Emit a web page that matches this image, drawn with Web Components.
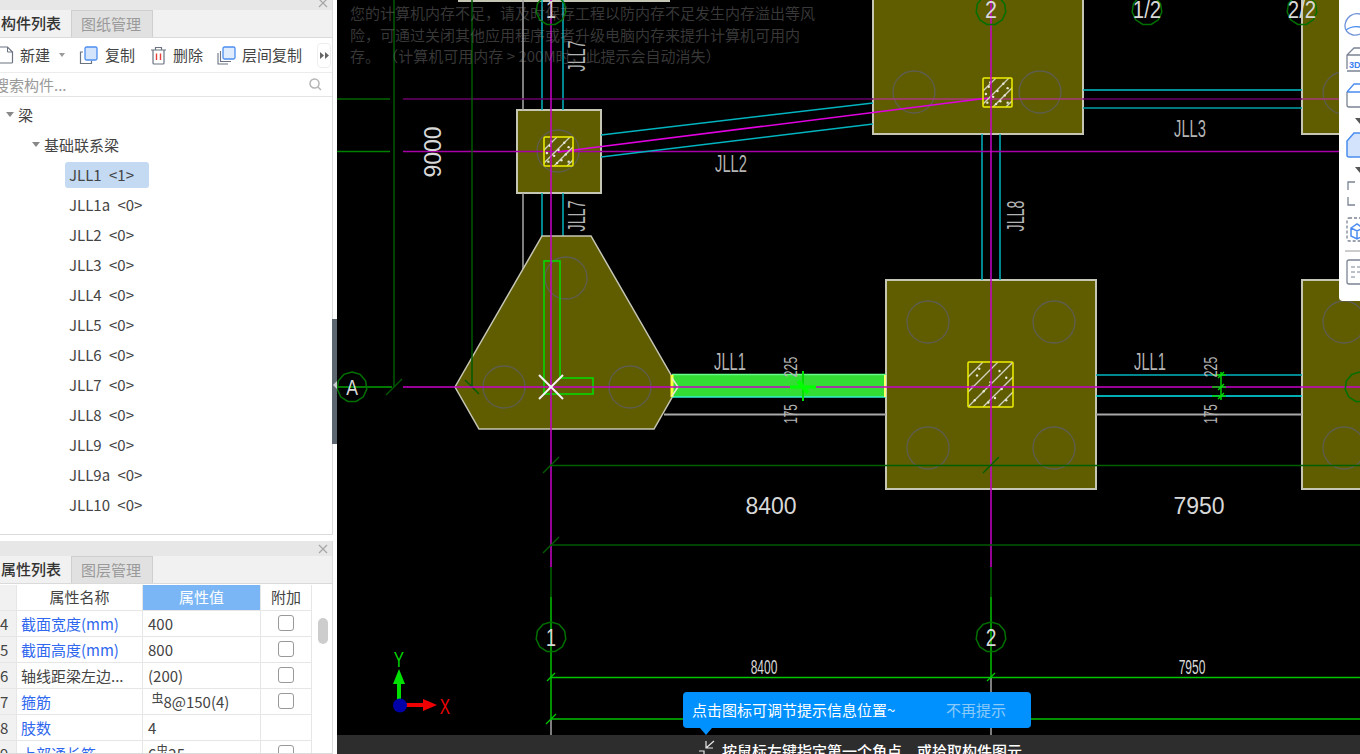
<!DOCTYPE html>
<html lang="zh">
<head>
<meta charset="utf-8">
<title>构件列表</title>
<style>
  html, body { margin: 0; height: 754px; overflow: hidden; background: #000; }
  body { display: flex; font-family: "Noto Sans CJK SC", "Noto Sans", sans-serif; }
</style>
</head>
<body>
<side-bar>
  <dock-panel tabs="构件列表,图纸管理" style="height:540px;margin-top:-5px">
    <tool-bar></tool-bar>
    <search-box></search-box>
    <comp-tree></comp-tree>
  </dock-panel>
  <dock-panel tabs="属性列表,图层管理" style="flex:1;margin-top:6px">
    <prop-table></prop-table>
  </dock-panel>
</side-bar>
<cad-canvas>
  <mem-notice></mem-notice>
  <right-tools></right-tools>
  <hint-bubble></hint-bubble>
  <status-bar></status-bar>
</cad-canvas>

<script>
class SideBar extends HTMLElement {
  constructor() {
    super();
    this.attachShadow({mode: 'open'}).innerHTML = `
      <style>
        :host { display: flex; flex-direction: column; width: 337px; height: 754px; flex: none; background: #fff; position: relative; overflow: hidden; }
        .splitter { position: absolute; left: 332px; top: 319px; width: 5px; height: 125px; background: #5c6670; }
        .splitter::after { content: ''; position: absolute; left: 1px; top: 62px; border: 4px solid transparent; border-right-color: #c8ccd0; border-left: 0; }
      </style>
      <slot></slot>
      <div class="splitter"></div>
    `;
  }
}
customElements.define('side-bar', SideBar);

class DockPanel extends HTMLElement {
  constructor() {
    super();
    this.attachShadow({mode: 'open'});
  }

  connectedCallback() {
    const [first, second] = this.getAttribute('tabs').split(',');
    this.shadowRoot.innerHTML = `
      <style>
        :host { display: flex; flex-direction: column; width: 333px; box-sizing: border-box; border-right: 1px solid #dcdcdc; border-bottom: 1px solid #dcdcdc; overflow: hidden; color: #444; font-size: 15px; }
        .strip { height: 15px; flex: none; background: #e7e7e7; display: flex; justify-content: flex-end; align-items: center; padding-right: 4px; }
        .strip svg { display: block; }
        .tabs { height: 28px; flex: none; box-sizing: border-box; display: flex; background: #f1f1f1; border-bottom: 1px solid #dadada; }
        .tab { box-sizing: border-box; height: 27px; line-height: 25px; }
        .on { width: 71px; padding-left: 1px; font-weight: 500; color: #333; }
        .off { width: 82px; padding-left: 9px; color: #9a9a9a; background: #e1e1e1; border: 1px solid #cfcfcf; border-bottom: 0; }
      </style>
      <div class="strip"><svg width="10" height="10" viewBox="0 0 10 10"><path d="M1 1l8 8M9 1l-8 8" stroke="#a8a8a8" stroke-width="1.3"/></svg></div>
      <div class="tabs"><div class="tab on">${first}</div><div class="tab off">${second}</div></div>
      <slot></slot>
    `;
  }
}
customElements.define('dock-panel', DockPanel);

class ToolBar extends HTMLElement {
  constructor() {
    super();
    this.attachShadow({mode: 'open'}).innerHTML = `
      <style>
        :host { display: flex; align-items: center; height: 35px; flex: none; box-sizing: border-box; border-bottom: 1px solid #ececec; background: #fff; white-space: nowrap; }
        svg { display: block; flex: none; }
        span { line-height: 20px; flex: none; }
        .more { margin-left: 15px; width: 12px; height: 23px; flex: none; border: 1px solid #eee; border-radius: 4px; display: flex; align-items: center; justify-content: center; }
      </style>
      <svg style="margin-left:-4px" width="18" height="18" viewBox="0 0 18 18" fill="none"><path d="M1.5 1h10l5 5v10a1 1 0 0 1-1 1h-13a1 1 0 0 1-1-1z" stroke="#6b7280" stroke-width="1.2"/><path d="M11.5 1v5h5" stroke="#6b7280"/></svg>
      <span style="margin-left:6px">新建</span>
      <svg style="margin-left:8px" width="8" height="5" viewBox="0 0 8 5"><path d="M1 0h6L4 4z" fill="#999"/></svg>
      <svg style="margin-left:13px" width="19" height="19" viewBox="0 0 19 19" fill="none"><path d="M4 6H1.5v11.5h11V15" stroke="#6b7280" stroke-width="1.2"/><rect x="6" y="1" width="12" height="13" rx="1.5" fill="#d4e4fb" stroke="#4b8df0" stroke-width="1.3"/></svg>
      <span style="margin-left:7px">复制</span>
      <svg style="margin-left:15px" width="17" height="19" viewBox="0 0 17 19" fill="none"><path d="M1 4h15M5.5 4V1.5h6V4M3 4v13a1 1 0 0 0 1 1h9a1 1 0 0 0 1-1V4" stroke="#6b7280" stroke-width="1.2"/><path d="M6.5 7.5v6.5M10.5 7.5v6.5" stroke="#e8403a" stroke-width="1.4"/></svg>
      <span style="margin-left:6px">删除</span>
      <svg style="margin-left:14px" width="19" height="19" viewBox="0 0 19 19" fill="none"><path d="M1 7v11h10M3.5 5v10.5H14" stroke="#6b7280" stroke-width="1.1"/><rect x="6" y="1" width="12" height="12" rx="1.5" fill="#e0ecfc" stroke="#4b8df0" stroke-width="1.3"/></svg>
      <span style="margin-left:6px">层间复制</span>
      <div class="more"><svg width="9" height="7" viewBox="0 0 9 7"><path d="M0 0l4 3.5L0 7zM5 0l4 3.5L5 7z" fill="#666"/></svg></div>
    `;
  }
}
customElements.define('tool-bar', ToolBar);

class SearchBox extends HTMLElement {
  constructor() {
    super();
    this.attachShadow({mode: 'open'}).innerHTML = `
      <style>
        :host { display: flex; align-items: center; justify-content: space-between; height: 24px; flex: none; box-sizing: border-box; border-bottom: 1px solid #e4e4e4; background: #fff; padding-right: 10px; }
        span { margin-left: -6px; color: #999; font-size: 15px; line-height: 22px; }
        svg { display: block; }
      </style>
      <span>搜索构件...</span>
      <svg width="13" height="13" viewBox="0 0 13 13" fill="none"><circle cx="5.5" cy="5.5" r="4.5" stroke="#b5b5b5" stroke-width="1.5"/><path d="M9 9l3 3" stroke="#b5b5b5" stroke-width="1.5"/></svg>
    `;
  }
}
customElements.define('search-box', SearchBox);

class CompTree extends HTMLElement {
  constructor() {
    super();
    const beams = ['JLL1 &lt;1&gt;', 'JLL1a &lt;0&gt;', 'JLL2 &lt;0&gt;', 'JLL3 &lt;0&gt;', 'JLL4 &lt;0&gt;', 'JLL5 &lt;0&gt;', 'JLL6 &lt;0&gt;', 'JLL7 &lt;0&gt;', 'JLL8 &lt;0&gt;', 'JLL9 &lt;0&gt;', 'JLL9a &lt;0&gt;', 'JLL10 &lt;0&gt;'];
    this.attachShadow({mode: 'open'}).innerHTML = `
      <style>
        :host { display: block; flex: 1; background: #fff; padding-top: 3px; }
        .row { height: 30px; box-sizing: border-box; display: flex; align-items: center; white-space: pre; }
        .caret { width: 0; height: 0; border: 4.5px solid transparent; border-top: 5px solid #888; border-bottom: 0; margin-right: 4px; }
        .l0 { padding-left: 6px; padding-bottom: 2px; }
        .l1 { padding-left: 32px; padding-bottom: 2px; }
        .leaf { padding-left: 65px; }
        .leaf span { display: block; box-sizing: border-box; height: 26px; line-height: 26px; padding: 0 4px; border-radius: 3px; min-width: 84px; word-spacing: 4px; }
        .sel { background: #c3daf2; }
      </style>
      <div class="row l0"><i class="caret"></i>梁</div>
      <div class="row l1"><i class="caret"></i>基础联系梁</div>
      ${beams.map((b, i) => `<div class="row leaf"><span class="${i ? '' : 'sel'}">${b}</span></div>`).join('')}
    `;
  }
}
customElements.define('comp-tree', CompTree);

class PropTable extends HTMLElement {
  constructor() {
    super();
    const box = '<i class="box"></i>';
    const rebar = '<sup>虫</sup>';
    const rows = [
      ['4', '截面宽度(mm)', '400', box, 1],
      ['5', '截面高度(mm)', '800', box, 1],
      ['6', '轴线距梁左边...', '(200)', box, 0],
      ['7', '箍筋', `&nbsp;${rebar}8@150(4)`, box, 1],
      ['8', '肢数', '4', '', 1],
      ['9', '上部通长筋', `6${rebar}25`, box, 1]
    ];
    this.attachShadow({mode: 'open'}).innerHTML = `
      <style>
        :host { display: block; position: relative; flex: 1; background: #fff; padding-top: 1px; overflow: hidden; }
        .grid { display: grid; grid-template-columns: 17px 126px 118px 51px; grid-auto-rows: 26px; width: 312px; }
        .grid > div { box-sizing: border-box; border-right: 1px solid #e6e6e6; border-bottom: 1px solid #e6e6e6; line-height: 26px; padding-left: 4px; white-space: nowrap; overflow: hidden; }
        .grid > .value { padding-left: 5px; }
        .grid > .num { background: #f1f1f1; padding-left: 0; text-align: right; padding-right: 9px; overflow: visible; }
        .grid > .head { text-align: center; padding: 0; line-height: 24px; }
        .grid > .val { background: #7ab6f5; color: #fff; }
        .blue { color: #2f68ee; }
        .grid > .add { padding: 0; display: flex; align-items: center; justify-content: center; }
        .box { display: block; width: 16px; height: 16px; box-sizing: border-box; border: 1px solid #999; border-radius: 3px; margin-top: -2px; }
        sup { font-size: 12px; line-height: 0; vertical-align: 5px; }
        .thumb { position: absolute; left: 318px; top: 34px; width: 10px; height: 26px; border-radius: 5px; background: #cdcdcd; }
      </style>
      <div class="grid">
        <div class="num"></div><div class="head">属性名称</div><div class="head val">属性值</div><div class="head">附加</div>
        ${rows.map(r => `<div class="num">${r[0]}</div><div class="${r[4] ? 'blue' : ''}">${r[1]}</div><div class="value">${r[2]}</div><div class="add">${r[3]}</div>`).join('')}
      </div>
      <div class="thumb"></div>
    `;
  }
}
customElements.define('prop-table', PropTable);

class CadCanvas extends HTMLElement {
  constructor() {
    super();
    this.attachShadow({mode: 'open'}).innerHTML = `
      <style>
        :host { display: block; position: relative; flex: 1; height: 754px; background: #000; overflow: hidden; }
        svg { display: block; width: 1023px; height: 754px; }
        text { font-family: "Liberation Sans", sans-serif; fill: #d8d8d8; }
        text.thin { fill: #b4b4b4; }
      </style>
      <svg viewBox="337 0 1023 754">${this.drawing()}</svg>
      <slot></slot>
    `;
  }

  line(x1, y1, x2, y2, color, w = 1.5) {
    return `<line x1="${x1}" y1="${y1}" x2="${x2}" y2="${y2}" stroke="${color}" stroke-width="${w}"/>`;
  }

  label(str, x, y, size, sx = 1, rot = 0, cls = '') {
    return `<text class="${cls}" text-anchor="middle" font-size="${size}" transform="translate(${x} ${y}) rotate(${rot}) scale(${sx} 1)">${str}</text>`;
  }

  pile(cx, cy) {
    return `<circle cx="${cx}" cy="${cy}" r="21" fill="none" stroke="#5e5e50" stroke-width="1.3"/>`;
  }

  footing(x, y, w, h) {
    return `<rect x="${x}" y="${y}" width="${w}" height="${h}" fill="#605c00" stroke="#c6c6b4" stroke-width="2"/>`;
  }

  bubble(cx, cy, r = 15) {
    const pts = [];
    for (let i = 0; i < 11; i++) {
      const a = Math.PI * 2 * i / 11 - Math.PI / 2;
      pts.push((cx + r * Math.cos(a)).toFixed(1) + ',' + (cy + r * Math.sin(a)).toFixed(1));
    }
    return `<polygon points="${pts.join(' ')}" fill="none" stroke="#007000" stroke-width="1.5"/>`;
  }

  tick(x, y, color, r = 8) {
    return this.line(x - r, y + r, x + r, y - r, color, 1.3);
  }

  // column section: yellow square with rebar hatching
  column(x, y, s, id, step) {
    const lines = [];
    for (let o = x - s; o < x + s; o += step) {
      lines.push(this.line(o, y + s, o + s, y, '#d0d0c0', 1.3));
    }
    const dots = [[.2, .3], [.7, .2], [.85, .35], [.35, .65], [.15, .85], [.6, .8], [.85, .85], [.5, .45], [.25, .15], [.75, .6], [.45, .9], [.1, .55]]
      .map(d => `<circle cx="${x + d[0] * s}" cy="${y + d[1] * s}" r="1.2" fill="#e8e8d8"/>`).join('');
    return `<clipPath id="${id}"><rect x="${x}" y="${y}" width="${s}" height="${s}"/></clipPath>
      <g clip-path="url(#${id})">${lines.join('')}${dots}</g>
      <rect x="${x}" y="${y}" width="${s}" height="${s}" rx="1" fill="none" stroke="#f0f000" stroke-width="1.5"/>`;
  }

  drawing() {
    const L = this.line.bind(this), T = this.label.bind(this);
    const mag = '#c800c8', dmag = '#6a006a', cyan = '#00b4c0', gray = '#a8a8a8';
    const dg = '#005a00', g = '#00a000';
    return `
      ${this.footing(459, -20, 210, 21)}
      ${this.footing(873, -5, 210, 139)}
      ${this.footing(1302, -5, 70, 139)}
      ${this.footing(517, 110, 84, 83)}
      ${this.footing(886, 280, 210, 209)}
      ${this.footing(1302, 280, 70, 209)}

      ${L(523, 0, 523, 110, gray)}${L(523, 193, 523, 270, gray)}
      ${L(542, 0, 542, 110, cyan)}${L(563, 0, 563, 110, cyan)}
      ${L(542, 193, 542, 236, cyan)}${L(563, 193, 563, 236, cyan)}
      ${L(982, 134, 982, 280, cyan)}${L(1000, 134, 1000, 280, cyan)}

      <polygon points="542,236 591,236 678,387 654,429 479,429 455,387" fill="#605c00" stroke="#c6c6b4" stroke-width="1.5"/>

      ${[[914, 92], [1040, 92], [1344, 93], [558, 151], [928, 322], [1054, 322], [928, 448], [1054, 448], [1344, 322], [1344, 448], [566, 278], [504, 387], [630, 387]].map(p => this.pile(p[0], p[1])).join('')}

      ${L(337, 99, 390, 99, '#006400')}${L(403, 99, 873, 99, dmag)}${L(873, 99, 1083, 99, '#a83a78')}${L(1083, 99, 1302, 99, dmag)}${L(1302, 99, 1340, 99, '#a83a78')}
      ${L(337, 151.5, 390, 151.5, '#008000')}${L(403, 151.5, 1340, 151.5, '#a800a8')}
      ${L(394, 0, 394, 387, dg)}${L(472, 0, 472, 387, dg)}
      ${this.tick(394, 387, dg)}${L(465, 380, 479, 394, dg, 1.3)}

      ${L(601, 135, 873, 103, cyan)}${L(601, 157, 873, 124, cyan)}
      ${L(558, 152, 988, 98, '#e000e0')}
      ${L(1083, 90, 1302, 90, '#00c0c8')}${L(1083, 108, 1302, 108, '#00a0a8')}

      ${this.column(544, 137, 29, 'c1', 13)}
      ${this.column(983, 78, 29, 'c2', 13)}
      ${this.column(968, 362, 45, 'c3', 15)}

      <path d="M544 261h16v117h33v16h-49z" fill="none" stroke="#00e000" stroke-width="1.5"/>

      <rect x="672" y="375" width="214" height="22" fill="#33dd33"/>
      ${L(672, 374.5, 886, 374.5, '#66ff88')}${L(672, 397, 886, 397, '#30f0d0')}
      ${L(672, 375, 672, 397, '#ffff40', 3)}${L(885, 375, 885, 397, '#ffff70', 2)}
      <path d="M672 378l6 9-6 9" fill="none" stroke="#e8e8d0" stroke-width="1.5"/>
      ${L(664, 414.5, 886, 414.5, gray, 2)}${L(1096, 414.5, 1302, 414.5, gray, 2)}
      ${L(1096, 375, 1302, 375, cyan)}${L(1096, 396, 1302, 396, '#00e8f0')}

      ${L(337, 387, 392, 387, g)}${L(403, 387, 1360, 387, mag)}
      ${L(551, 0, 551, 567, mag)}${L(991, 0, 991, 567, mag)}
      ${L(551, 567, 551, 597, '#006400')}${L(991, 567, 991, 597, '#006400')}
      ${L(551, 597, 551, 720, '#00c000')}${L(991, 597, 991, 678, '#00c000')}
      ${L(551, 720, 551, 754, gray)}${L(991, 678, 991, 754, gray)}

      ${L(539, 375, 563, 399, '#f4f4f4', 2)}${L(563, 375, 539, 399, '#f4f4f4', 2)}

      ${L(790, 387, 816, 387, '#00ff00', 3)}${L(803, 371, 803, 401, '#00e000', 2)}${L(798, 381, 808, 393, '#00ff00', 4)}
      ${L(1212, 375, 1226, 375, '#00d000')}${L(1212, 387, 1226, 387, '#00d000')}${L(1212, 396, 1226, 396, '#00d000')}
      ${L(1221, 372, 1221, 400, '#00d000')}
      ${this.tick(1221, 375, '#00e000', 3)}${this.tick(1221, 387, '#00e000', 3)}${this.tick(1221, 396, '#00e000', 3)}

      ${L(551, 465.5, 1360, 465.5, '#006000')}${L(551, 545, 1360, 545, '#005a00')}
      ${this.tick(551, 465, '#006000')}${this.tick(991, 465, '#006000')}${this.tick(551, 545, '#006000')}
      ${L(551, 677.5, 1360, 677.5, '#00c800')}${L(551, 719, 1360, 719, '#009000', 2)}
      ${this.tick(551, 677, '#00c800', 4)}${this.tick(991, 677, '#00c800', 4)}${this.tick(551, 719, '#00c800', 5)}

      ${this.bubble(551, 10)}${this.bubble(991, 10)}${this.bubble(1147, 10)}${this.bubble(1302, 10)}
      ${this.bubble(551, 637)}${this.bubble(991, 637)}${this.bubble(352, 387)}${this.bubble(1360, 387)}

      ${T('1', 551, 18, 24, .75)}${T('2', 991, 18, 24, .9)}${T('1/2', 1147, 18, 24, .85)}${T('2/2', 1302, 18, 24, .85)}
      ${T('1', 551, 646, 24, .75)}${T('2', 991, 646, 24, .8)}${T('A', 352, 395, 22, .8)}

      ${T('9000', 441, 152, 23, 1, -90)}
      ${T('JLL7', 585, 56, 23, .62, -90, 'thin')}${T('JLL7', 585, 216, 23, .62, -90, 'thin')}${T('JLL8', 1024, 216, 23, .62, -90, 'thin')}
      ${T('JLL2', 731, 172, 23, .64, 0, 'thin')}${T('JLL3', 1190, 137, 23, .64, 0, 'thin')}
      ${T('JLL1', 730, 370, 23, .64, 0, 'thin')}${T('JLL1', 1150, 370, 23, .64, 0, 'thin')}
      ${T('225', 797, 367, 18, .68, -90, 'thin')}${T('175', 797, 414, 18, .65, -90, 'thin')}
      ${T('225', 1217, 367, 18, .68, -90, 'thin')}${T('175', 1217, 414, 18, .65, -90, 'thin')}
      ${T('8400', 771, 514, 23)}${T('7950', 1199, 514, 23)}
      ${T('8400', 764, 674, 20, .6)}${T('7950', 1192, 674, 20, .6)}

      ${L(399, 683, 399, 702, '#00e000', 4)}<path d="M399 669l6 15h-12z" fill="#00e000"/>
      ${L(404, 705, 424, 705, '#f00000', 4)}<path d="M437 705l-14 6v-12z" fill="#f00000"/>
      <circle cx="400" cy="705.5" r="7" fill="#0000a8"/>
      <text text-anchor="middle" font-size="22" style="fill:#00d800" transform="translate(399 667) scale(.7 1)">Y</text>
      <text text-anchor="middle" font-size="22" style="fill:#f00000" transform="translate(445 714) scale(.7 1)">X</text>
    `;
  }
}
customElements.define('cad-canvas', CadCanvas);

class MemNotice extends HTMLElement {
  constructor() {
    super();
    this.attachShadow({mode: 'open'}).innerHTML = `
      <style>
        :host { position: absolute; left: 13px; top: 2px; font-size: 15px; line-height: 21.5px; color: rgba(150, 150, 150, .38); white-space: nowrap; }
      </style>
      您的计算机内存不足，请及时保存工程以防内存不足发生内存溢出等风<br>
      险，可通过关闭其他应用程序或者升级电脑内存来提升计算机可用内<br>
      存。 （计算机可用内存 &gt; 200M时，此提示会自动消失）
    `;
  }
}
customElements.define('mem-notice', MemNotice);

class RightTools extends HTMLElement {
  constructor() {
    super();
    this.attachShadow({mode: 'open'}).innerHTML = `
      <style>
        :host { position: absolute; left: 1002px; top: 0; width: 21px; height: 301px; background: #fff; border-bottom-left-radius: 4px; overflow: hidden; }
        svg { display: block; }
        text { font-family: "Liberation Sans", sans-serif; font-weight: 700; font-size: 9px; fill: #3b82f0; }
      </style>
      <svg width="21" height="301" viewBox="1339 0 21 301" fill="none" stroke="#7b8494" stroke-width="1.3">
        <path d="M1360 14c-8-2-14 4-15 11-.5 5 3 9 8 10 3 .5 5 0 7-1" stroke="#6f93d8"/>
        <path d="M1346 30c4-3 9-4 14-3" stroke="#4b8df0"/>
        <path d="M1347 69V55l7-7h8M1347 55h15M1347 71h15" />
        <text x="1349" y="68" stroke="none">3D</text>
        <path d="M1347 92l7-8h8M1347 92h15" stroke="#4b8df0"/>
        <path d="M1347 92v13a2 2 0 0 0 2 2h13"/>
        <path d="M1355 118h10l-5 6z" fill="#555" stroke="none"/>
        <path d="M1347 141l7-8h8v24h-13a2 2 0 0 1-2-2z" fill="#d2e3fb" stroke="#4b8df0" stroke-width="1.5"/>
        <path d="M1355 167h10l-5 6z" fill="#555" stroke="none"/>
        <path d="M1355 182h-7v8M1355 205h-7v-8"/>
        <rect x="1347" y="218" width="20" height="23" rx="2" stroke-dasharray="3 2"/>
        <path d="M1351 228l6-4 6 4v8l-6 3-6-3zM1351 228l6 3 6-3M1357 231v8" stroke="#4b8df0" stroke-width="1.5"/>
        <path d="M1345 251h15" stroke="#999" stroke-width="1"/>
        <rect x="1347" y="260" width="20" height="24" rx="2"/>
        <path d="M1351 267h4M1357 267h5M1351 272h4M1357 272h5M1351 277h4" stroke-width="1"/>
      </svg>
    `;
  }
}
customElements.define('right-tools', RightTools);

class HintBubble extends HTMLElement {
  constructor() {
    super();
    this.attachShadow({mode: 'open'}).innerHTML = `
      <style>
        :host { position: absolute; left: 346px; top: 692px; width: 348px; height: 36px; box-sizing: border-box; padding: 0 25px 2px 9px; background: #0091ff; border-radius: 4px; display: flex; align-items: center; justify-content: space-between; color: #fff; font-size: 15px; }
        :host::after { content: ''; position: absolute; left: 17px; top: 36px; border: 6px solid transparent; border-top: 7px solid #0091ff; border-bottom: 0; }
        .off { color: #8ccaf9; }
      </style>
      <span>点击图标可调节提示信息位置~</span>
      <span class="off">不再提示</span>
    `;
  }
}
customElements.define('hint-bubble', HintBubble);

class StatusBar extends HTMLElement {
  constructor() {
    super();
    this.attachShadow({mode: 'open'}).innerHTML = `
      <style>
        :host { position: absolute; left: 0; right: 0; bottom: 0; height: 19px; background: #2d2d2d; overflow: hidden; color: #fff; font-size: 15px; font-weight: 500; padding-left: 361px; display: flex; gap: 6px; }
        svg { display: block; flex: none; margin-top: 5px; }
        span { line-height: 24px; margin-top: 4px; white-space: nowrap; }
      </style>
      <svg width="18" height="14" viewBox="0 0 18 14" fill="none" stroke="#e8e8e8" stroke-width="1.2"><path d="M8 1v7h7M8 8l8-7M1 11h5v3"/></svg>
      <span>按鼠标左键指定第一个角点，或拾取构件图元</span>
    `;
  }
}
customElements.define('status-bar', StatusBar);
</script>
</body>
</html>
